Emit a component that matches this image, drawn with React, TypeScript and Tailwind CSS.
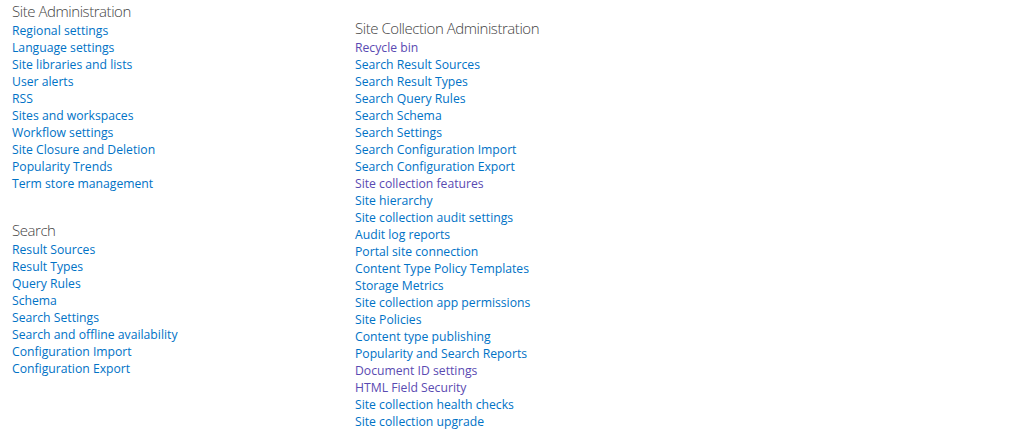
import React from "react";

type L = { t: string; v?: boolean };

const admin: L[] = [
  { t: "Regional settings" },
  { t: "Language settings" },
  { t: "Site libraries and lists" },
  { t: "User alerts" },
  { t: "RSS" },
  { t: "Sites and workspaces" },
  { t: "Workflow settings" },
  { t: "Site Closure and Deletion" },
  { t: "Popularity Trends" },
  { t: "Term store management" },
];

const search: L[] = [
  { t: "Result Sources" },
  { t: "Result Types" },
  { t: "Query Rules" },
  { t: "Schema" },
  { t: "Search Settings" },
  { t: "Search and offline availability" },
  { t: "Configuration Import" },
  { t: "Configuration Export" },
];

const coll: L[] = [
  { t: "Recycle bin", v: true },
  { t: "Search Result Sources" },
  { t: "Search Result Types" },
  { t: "Search Query Rules" },
  { t: "Search Schema" },
  { t: "Search Settings" },
  { t: "Search Configuration Import" },
  { t: "Search Configuration Export" },
  { t: "Site collection features", v: true },
  { t: "Site hierarchy" },
  { t: "Site collection audit settings" },
  { t: "Audit log reports" },
  { t: "Portal site connection" },
  { t: "Content Type Policy Templates" },
  { t: "Storage Metrics" },
  { t: "Site collection app permissions" },
  { t: "Site Policies" },
  { t: "Content type publishing" },
  { t: "Popularity and Search Reports" },
  { t: "Document ID settings", v: true },
  { t: "HTML Field Security", v: true },
  { t: "Site collection health checks" },
  { t: "Site collection upgrade" },
];

function Section({ title, links, className = "" }: { title: string; links: L[]; className?: string }) {
  return (
    <div className={className}>
      <h3 className="text-[15px] leading-[20px] font-light tracking-[-0.45px] text-[#444444]">{title}</h3>
      <ul className="flex flex-col">
        {links.map((l) => (
          <li key={l.t} className="h-[17px] leading-[17px]">
            <a
              href="#"
              className={"text-[12.2px] whitespace-nowrap " + (l.v ? "text-[#5a4ab2]" : "text-[#0072c6]")}
            >
              {l.t}
            </a>
          </li>
        ))}
      </ul>
    </div>
  );
}

export default function App() {
  return (
    <div
      className="w-[1014px] h-[439px] bg-white overflow-hidden"
      style={{ fontFamily: '"Open Sans", "Noto Sans", sans-serif' }}
    >
      <div className="flex pl-[12px] pt-[1px]">
        <div className="w-[343px] flex flex-col">
          <Section title="Site Administration" links={admin} />
          <Section title="Search" links={search} className="mt-[29px]" />
        </div>
        <div className="flex flex-col pt-[17px]">
          <Section title="Site Collection Administration" links={coll} />
        </div>
      </div>
    </div>
  );
}
